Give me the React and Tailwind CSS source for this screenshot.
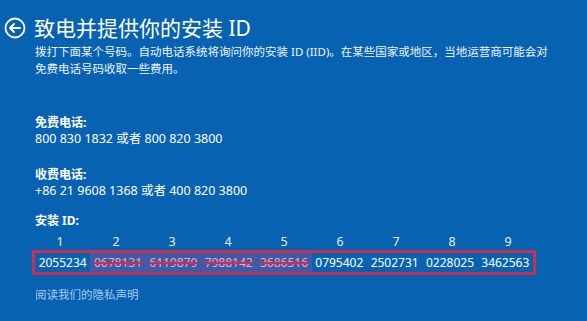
const ids = ['2055234', '0678131', '6119879', '7988142', '3686516', '0795402', '2502731', '0228025', '3462563']

function BackIcon() {
  return (
    <svg width="22" height="22" viewBox="0 0 22 22" fill="none" stroke="white" strokeWidth="1.8">
      <circle cx="11" cy="11" r="9.5" />
      <path d="M6 11h10M10 7l-4 4 4 4" strokeLinecap="round" strokeLinejoin="round" />
    </svg>
  )
}

export default function App() {
  return (
    <div
      className="w-[587px] h-[321px] overflow-hidden bg-[#0862b2] text-white"
      style={{ fontFamily: '"Noto Sans", "Noto Sans CJK SC", sans-serif' }}
    >
      <div className="flex items-center gap-[8px] pl-[4px] pt-[15px]">
        <BackIcon />
        <h1 className="text-[21px] leading-[26px] font-normal">致电并提供你的安装 ID</h1>
      </div>

      <div className="pl-[35px] pr-[30px]">
        <p className="mt-[2px] text-[11.5px] leading-[17px] text-[#eef4fb]">
          拨打下面某个号码。自动电话系统将询问你的安装 ID (IID)。在某些国家或地区，当地运营商可能会对免费电话号码收取一些费用。
        </p>

        <div className="mt-[38px] text-[12px] leading-[16px]">
          <div className="font-bold">免费电话:</div>
          <div className="text-[12.5px]">800 830 1832 或者 800 820 3800</div>
        </div>

        <div className="mt-[20px] text-[12px] leading-[16px]">
          <div className="font-bold">收费电话:</div>
          <div className="text-[12.5px]">+86 21 9608 1368 或者 400 820 3800</div>
        </div>

        <div className="mt-[14px] text-[12px] leading-[16px] font-bold">安装 ID:</div>
      </div>

      <div className="ml-[32px] w-[504px]">
        <div className="grid grid-cols-9 mt-[5px] text-[12.5px] leading-[16px] text-[#e8f0fa]">
          {ids.map((_, i) => (
            <div key={i} className="text-center">{i + 1}</div>
          ))}
        </div>
        <div className="mt-[0px] grid grid-cols-9 border-[3px] border-[#c8304f] h-[25px] items-center text-[12px]">
          {ids.map((id, i) => {
            const hidden = i >= 1 && i <= 4
            return (
              <div
                key={id}
                className={
                  hidden
                    ? 'h-full flex items-center justify-center bg-[#3f5aa6] text-[#f2a6bc] line-through decoration-[#d8284c] decoration-2'
                    : 'h-full flex items-center justify-center'
                }
              >
                {id}
              </div>
            )
          })}
        </div>
      </div>

      <div className="pl-[35px] mt-[12px] text-[11.5px] leading-[16px] text-[#a9c8ec]">阅读我们的隐私声明</div>
    </div>
  )
}
